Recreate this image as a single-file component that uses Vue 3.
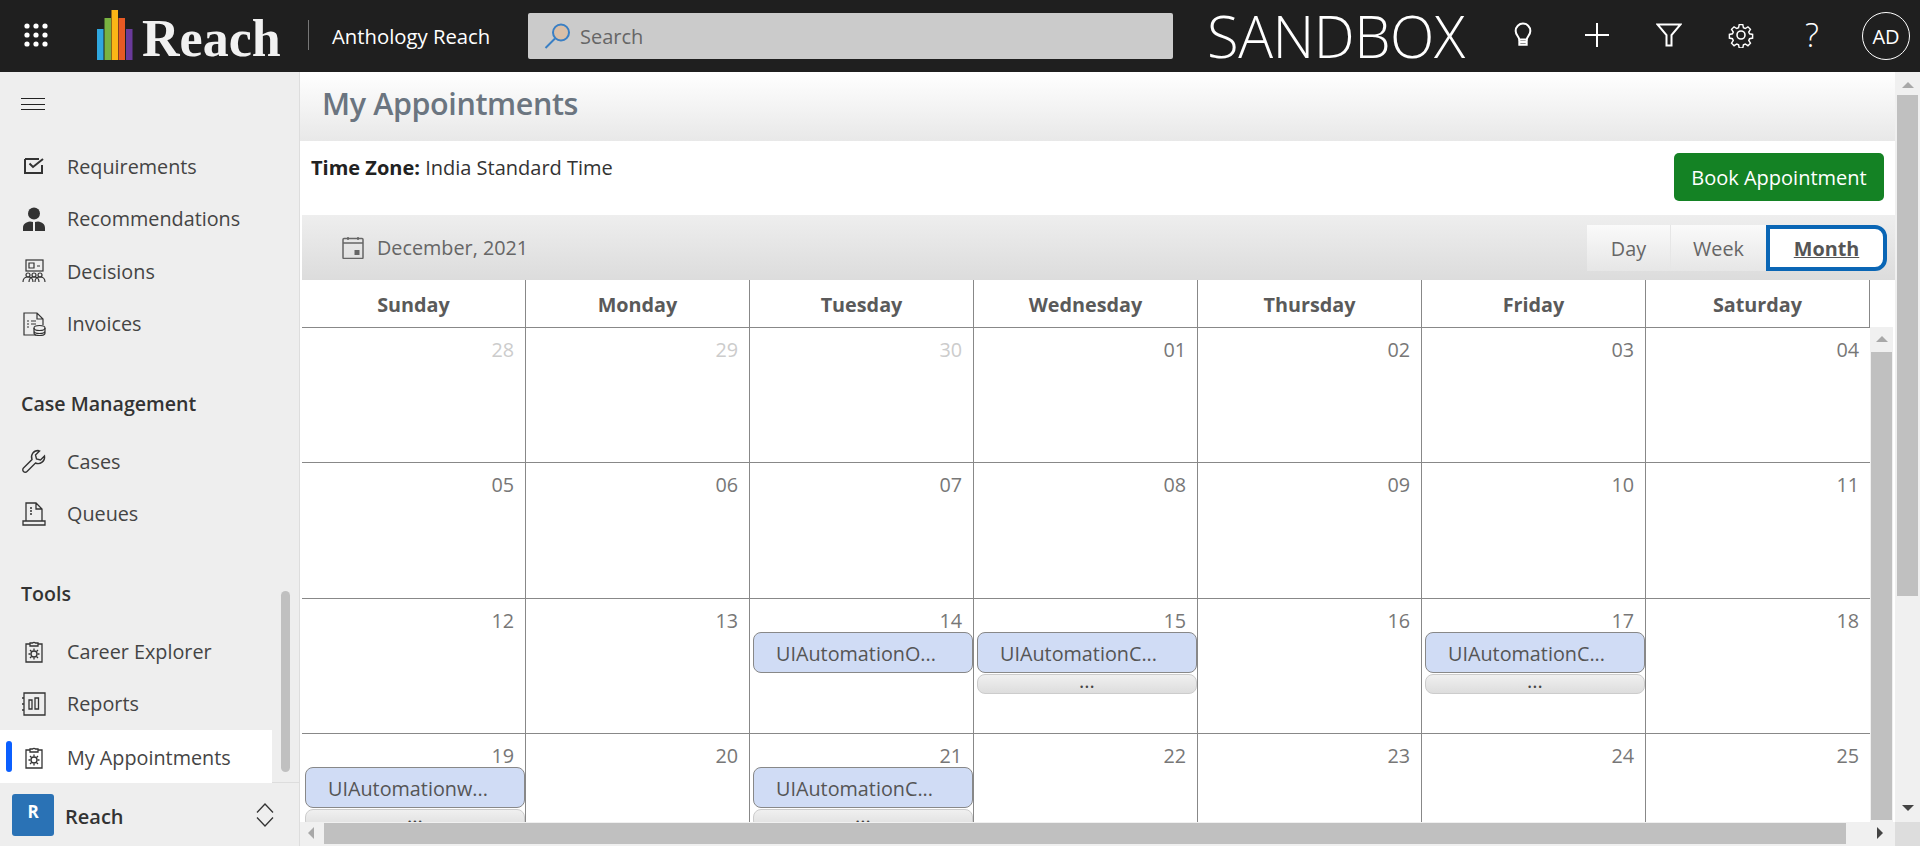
<template>
  <div class="app">
    <header class="topbar">
      <svg class="waffle" width="24" height="24" viewBox="0 0 24 24">
        <g fill="#fff">
          <template v-for="y in [3, 12, 21]" :key="y">
            <circle v-for="x in [3, 12, 21]" :key="x" :cx="x" :cy="y" r="2.6" />
          </template>
        </g>
      </svg>
      <svg class="bars" width="36" height="50" viewBox="0 0 36 50">
        <rect x="0" y="19" width="6.5" height="31" fill="#2fa7df" />
        <rect x="7.5" y="8" width="6.5" height="42" fill="#79b341" />
        <rect x="14.5" y="0" width="6.5" height="50" fill="#fbb616" />
        <rect x="21.5" y="8" width="6.5" height="42" fill="#e85a24" />
        <rect x="29" y="19" width="6.5" height="31" fill="#6a3a9b" />
      </svg>
      <span class="wordmark">Reach</span>
      <span class="divider"></span>
      <span class="product">Anthology Reach</span>
      <div class="search">
        <svg width="28" height="28" viewBox="0 0 28 28" fill="none">
          <circle cx="17" cy="10.5" r="8" fill="#d9bfa8" stroke="#3a7fc4" stroke-width="2" />
          <path d="M11 16.5 1.5 26" stroke="#3a7fc4" stroke-width="2" />
        </svg>
        <span>Search</span>
      </div>
      <span class="env">SANDBOX</span>
      <div class="actions">
        <svg width="22" height="26" viewBox="0 0 24 26" fill="none" stroke="#fff" stroke-width="2.2">
          <path d="M8 18c-.3-3-4-5-4-9.500a8 8 0 0 1 16 0c0 4.500-3.700 6.500-4 9.500z" />
          <path d="M8 18v5.500h8V18M8 20.500h8" />
        </svg>
        <svg width="26" height="26" viewBox="0 0 26 26" stroke="#fff" stroke-width="2">
          <path d="M1 13h24M13 1v24" />
        </svg>
        <svg width="26" height="24" viewBox="0 0 26 24" fill="none" stroke="#fff" stroke-width="2">
          <path d="M1.500 1.500h23L15.500 12v10.500h-5V12z" />
        </svg>
        <svg width="26" height="26" viewBox="0 0 26 26" fill="none" stroke="#fff" stroke-width="1.600">
          <circle cx="13" cy="13" r="4" />
          <path d="M11 1.500h4l.7 3.400 2 .9 3-1.900 2.800 2.800-1.900 3 .9 2 3.400.7v4l-3.400.7-.9 2 1.900 3-2.800 2.800-3-1.900-2 .9-.7 3.400h-4l-.7-3.400-2-.9-3 1.900-2.800-2.800 1.900-3-.9-2-3.400-.7v-4l3.400-.7.9-2-1.900-3 2.800-2.800 3 1.900 2-.9z" transform="translate(1.300 1.300) scale(.9)" />
        </svg>
        <span class="help">?</span>
        <span class="avatar">AD</span>
      </div>
    </header>

    <div class="body">
      <aside class="sidebar">
        <div class="burger">
          <span></span><span></span><span></span>
        </div>
        <nav class="nav">
          <template v-for="entry in nav" :key="entry.label">
            <div v-if="entry.heading" class="nav-heading">{{ entry.label }}</div>
            <div v-else class="nav-item" :class="{ active: entry.active }">
              <svg width="24" height="24" viewBox="0 0 24 24" fill="none" stroke="#333" stroke-width="1.500">
                <g v-if="entry.icon === 'check'">
                  <path d="M3 5h14M3 5v14h17v-8" stroke-width="2" />
                  <path d="M7.500 9.500 11 13l10-8" stroke-width="2" />
                </g>
                <g v-else-if="entry.icon === 'person'">
                  <circle cx="12" cy="6.500" r="6" fill="#333" stroke="none" />
                  <path d="M1 24v-3c0-4 3-6 7-6.500l3 .5v9zM23 24v-3c0-4-3-6-7-6.500l-3 .5v9z" fill="#333" stroke="none" />
                </g>
                <g v-else-if="entry.icon === 'board'" stroke-width="1.200">
                  <rect x="4" y="1" width="17" height="11" />
                  <path d="M7 4h5v5H7zM15 7h3" />
                  <circle cx="6" cy="16" r="2" />
                  <circle cx="12" cy="16" r="2" />
                  <circle cx="18" cy="16" r="2" />
                  <path d="M1 23c0-3 2-5 5-5s5 2 5 5M7 23c0-3 2-5 5-5s5 2 5 5M13 23c0-3 2-5 5-5s5 2 5 5" />
                </g>
                <g v-else-if="entry.icon === 'invoice'" stroke-width="1.200">
                  <path d="M14 23H2V1h13l6 6v6M15 1v6h6" />
                  <path d="M5 9h2M9 9h5M5 12h2M9 12h5M5 15h2" />
                  <ellipse cx="17.500" cy="16" rx="5.500" ry="2.500" />
                  <path d="M12 16v5c0 1.500 2.500 2.500 5.500 2.500S23 22.500 23 21v-5M12 19c0 1.400 2.500 2.500 5.500 2.500S23 20.400 23 19" />
                </g>
                <g v-else-if="entry.icon === 'wrench'" stroke-width="1.400">
                  <path d="M16 1.500a6.500 6.500 0 0 0-6 9L1.500 19a2.400 2.400 0 0 0 3.500 3.500l8.500-8.500a6.500 6.500 0 0 0 9-7l-4 4-4-1-1-4 4-4z" />
                </g>
                <g v-else-if="entry.icon === 'queue'" stroke-width="1.300">
                  <path d="M4 19V1h10l6 6v12M14 1v6h6" />
                  <path d="M8 6h2M8 9h2M8 12h2" />
                  <path d="M1 19v4h22v-4z" />
                </g>
                <g v-else-if="entry.icon === 'clipboard'" stroke-width="1.300">
                  <path d="M8 5H4v18h16V5h-4" />
                  <path d="M8 7V4h2.500a2 2 0 0 1 3 0H16v3z" />
                  <circle cx="12" cy="15" r="3" />
                  <path d="M12 9.500v2M12 18.500v2M6.500 15h2M15.500 15h2M8 11l1.500 1.500M14.500 17.500 16 19M16 11l-1.500 1.500M9.500 17.500 8 19" />
                </g>
                <g v-else-if="entry.icon === 'report'" stroke-width="1.300">
                  <path d="M2 1h21v22H2zM2 6H0M2 12H0M2 18H0" />
                  <path d="M7 8h3v9H7zM13 6h3.500v11H13z" />
                </g>
              </svg>
              <span>{{ entry.label }}</span>
            </div>
          </template>
          <div class="nav-thumb"></div>
        </nav>
        <div class="switcher">
          <span class="tile">R</span>
          <span class="switcher-name">Reach</span>
          <svg width="18" height="24" viewBox="0 0 18 24" fill="none" stroke="#333" stroke-width="1.300">
            <path d="M1 9.500 9 1l8 8.500M1 14.500 9 23l8-8.500" />
          </svg>
        </div>
      </aside>

      <main class="main">
        <div class="content">
          <div class="title-bar"><h1>My Appointments</h1></div>
          <div class="tz-row">
            <p><b>Time Zone:</b> India Standard Time</p>
            <button class="book">Book Appointment</button>
          </div>
          <div class="toolbar">
            <svg width="22" height="23" viewBox="0 0 22 23" fill="none" stroke="#666" stroke-width="1.500">
              <rect x="1" y="2.500" width="20" height="20" rx="1" />
              <path d="M1 7h20M6 1v3M16 1v3" />
              <rect x="12.500" y="14" width="5" height="5" fill="#666" stroke="none" />
            </svg>
            <span class="month-label">December, 2021</span>
            <div class="views">
              <span class="view">Day</span>
              <span class="view">Week</span>
              <span class="view current">Month</span>
            </div>
          </div>
          <div class="calendar">
            <div class="grid">
              <div v-for="d in dayNames" :key="d" class="dow">{{ d }}</div>
              <div v-for="c in cells" :key="c.key" class="cell">
                <div class="num" :class="{ faded: c.faded }">{{ c.num }}</div>
                <div v-if="c.event" class="event">{{ c.event }}</div>
                <div v-if="c.more" class="more">...</div>
              </div>
            </div>
            <div class="vbar">
              <div class="vbar-head"></div>
              <div class="vbar-track">
                <span class="tri up"></span>
                <div class="vbar-thumb"></div>
              </div>
            </div>
          </div>
          <div class="hbar">
            <span class="tri left"></span>
            <div class="hbar-thumb"></div>
            <span class="tri right"></span>
          </div>
        </div>
        <div class="page-bar">
          <div class="page-track">
            <span class="tri up"></span>
            <div class="page-thumb"></div>
            <span class="tri down"></span>
          </div>
          <div class="corner"></div>
        </div>
      </main>
    </div>
  </div>
</template>

<script setup>
const nav = [
  { label: 'Requirements', icon: 'check' },
  { label: 'Recommendations', icon: 'person' },
  { label: 'Decisions', icon: 'board' },
  { label: 'Invoices', icon: 'invoice' },
  { label: 'Case Management', heading: true },
  { label: 'Cases', icon: 'wrench' },
  { label: 'Queues', icon: 'queue' },
  { label: 'Tools', heading: true },
  { label: 'Career Explorer', icon: 'clipboard' },
  { label: 'Reports', icon: 'report' },
  { label: 'My Appointments', icon: 'clipboard', active: true }
];

const dayNames = ['Sunday', 'Monday', 'Tuesday', 'Wednesday', 'Thursday', 'Friday', 'Saturday'];

const events = {
  14: { event: 'UIAutomationO...' },
  15: { event: 'UIAutomationC...', more: true },
  17: { event: 'UIAutomationC...', more: true },
  19: { event: 'UIAutomationw...', more: true },
  21: { event: 'UIAutomationC...', more: true }
};

const cells = [
  { key: 'p28', num: '28', faded: true },
  { key: 'p29', num: '29', faded: true },
  { key: 'p30', num: '30', faded: true }
];
for (let d = 1; d <= 25; d++) {
  cells.push({ key: 'd' + d, num: String(d).padStart(2, '0'), ...events[d] });
}
</script>

<style>
html, body { margin: 0; height: 100%; overflow: hidden; background: #fff; }
</style>

<style scoped>
.app {
  width: 1920px; height: 846px; display: flex; flex-direction: column; overflow: hidden;
  font-family: "Open Sans", "Noto Sans", sans-serif; font-size: 19.800px; color: #444;
}

.topbar {
  height: 72px; flex: none; background: #1f1f1f; display: flex; align-items: center; color: #fff;
}
.waffle { margin-left: 24px; margin-top: -2px; }
.bars { margin-left: 49px; margin-top: -2px; }
.wordmark {
  font-family: "Liberation Serif", serif; font-weight: 700; font-size: 52px; line-height: 1;
  color: #f1f1f1; margin-left: 9px; margin-top: 6px; width: 166px;
}
.divider { width: 1px; height: 30px; background: #777; margin-top: -2px; }
.product { font-size: 20.300px; margin-left: 23px; width: 196px; white-space: nowrap; }
.search {
  width: 645px; height: 46px; background: #cbcbcb; border-radius: 2px; display: flex; align-items: center;
  color: #666; padding-left: 16px; box-sizing: border-box; gap: 8px; font-size: 20px;
}
.env {
  font-weight: 300; font-size: 58px; line-height: 66px; margin-left: 34px; width: 305px; white-space: nowrap;
  color: #fff; letter-spacing: -.5px;
}
.actions { display: flex; align-items: center; }
.actions svg:nth-child(1) { margin-top: -3px; }
.actions svg:nth-child(2) { margin-left: 50px; margin-top: -3px; }
.actions svg:nth-child(3) { margin-left: 46px; margin-top: -3px; }
.actions svg:nth-child(4) { margin-left: 46px; margin-top: -3px; }
.help { font-size: 33px; font-weight: 300; margin-left: 51px; margin-top: -3px; line-height: 1; width: 12px; }
.avatar {
  width: 48px; height: 48px; border: 1.500px solid #fff; border-radius: 50%; box-sizing: border-box;
  display: flex; align-items: center; justify-content: center; font-size: 20px; margin-left: 45px;
}

.body { flex: 1; min-height: 0; display: flex; }

.sidebar {
  width: 300px; flex: none; box-sizing: border-box; background: #eee; border-right: 1px solid #ddd;
  display: flex; flex-direction: column;
}
.burger {
  height: 68px; flex: none; box-sizing: border-box; padding: 26px 0 0 21px; display: flex; flex-direction: column; gap: 4.500px;
}
.burger span { width: 24px; height: 1px; background: #222; }
.nav { position: relative; flex: 1; min-height: 0; }
.nav-heading {
  height: 34px; line-height: 34px; margin: 37px 0 14px 21px; font-weight: 600; font-size: 19.600px; color: #333;
}
.nav-item {
  position: relative; width: 272px; height: 52.500px; display: flex; align-items: center; box-sizing: border-box;
  padding-left: 22px; gap: 21px;
}
.nav-item.active { background: #fff; padding-top: 2px; }
.nav-item.active::before {
  content: ""; position: absolute; left: 6px; top: 11px; width: 6px; height: 31px; border-radius: 3px; background: #0b5fff;
}
.nav-thumb {
  position: absolute; left: 281px; top: 451px; width: 9px; height: 181px; border-radius: 5px; background: #c0c0c0;
}
.switcher {
  height: 64px; flex: none; box-sizing: border-box; border-top: 1px solid #ddd; display: flex; align-items: center; padding-left: 12px;
}
.tile {
  width: 42px; height: 42px; border-radius: 3px; background: #2a72b5; color: #fff; font-weight: 700; font-size: 17px;
  display: flex; align-items: center; justify-content: center; padding-bottom: 6px; box-sizing: border-box;
}
.switcher-name { font-weight: 600; font-size: 20px; margin-left: 11px; width: 196px; color: #333; padding-top: 4px; }
.switcher svg { margin-left: -5px; }

.main { flex: 1; min-width: 0; display: flex; }
.content { width: 1595px; flex: none; display: flex; flex-direction: column; }
.title-bar {
  height: 69px; flex: none; background: linear-gradient(#fff, #e8e8e8); display: flex; align-items: center; padding: 0 0 7px 22px; box-sizing: border-box;
}
h1 { margin: 0; font-size: 30.500px; font-weight: 600; color: #6b7580; letter-spacing: -.4px; }
.tz-row {
  height: 74px; flex: none; display: flex; justify-content: space-between; box-sizing: border-box; padding: 12px 11px 0;
}
.tz-row p { margin: 0; line-height: 30px; color: #333; font-size: 20px; }
.tz-row b { color: #222; }
.book {
  width: 210px; height: 48px; background: #148224; color: #fff; border: 0; border-radius: 5px; font: inherit;
  font-size: 20px; padding: 0; white-space: nowrap;
}
.toolbar {
  height: 65px; flex: none; margin-left: 2px; display: flex; align-items: center; box-sizing: border-box; padding: 0 8px 0 40px;
  background: linear-gradient(#eee, #dcdcdc);
}
.month-label { margin-left: 13px; color: #666; }
.views { margin-left: auto; display: flex; height: 46px; margin-top: 1px; }
.view {
  display: flex; align-items: center; justify-content: center; width: 83px; color: #666;
  background: linear-gradient(#fafafa, #e6e6e6);
}
.view:nth-child(2) { width: 96px; border-left: 1px solid #e6e6e6; box-sizing: border-box; }
.view.current {
  width: 121px; box-sizing: border-box; background: #fff; border: 4px solid #0a66b5; border-radius: 0 12px 12px 0;
  font-weight: 700; color: #555; text-decoration: underline;
}
.calendar { flex: 1; min-height: 0; display: flex; overflow: hidden; margin-left: 2px; }
.grid {
  width: 1568px; flex: none; display: grid; grid-template-columns: repeat(7, 224px); grid-auto-rows: 135.300px;
  grid-template-rows: 48px;
}
.dow {
  box-sizing: border-box; border-right: 1px solid #888; border-bottom: 1px solid #888; display: flex; align-items: center; justify-content: center;
  font-weight: 700; color: #5a5a5a; padding-top: 2px;
}
.dow:last-of-type { border-right-color: #ddd; }
.cell { box-sizing: border-box; border-right: 1px solid #888; border-bottom: 1px solid #888; min-width: 0; }
.cell:nth-of-type(7n) { border-right: 0; }
.num { padding: 11px 11px 0 0; line-height: 22px; text-align: right; color: #777; }
.num.faded { color: #ccc; }
.event {
  height: 41px; width: 220px; margin-left: 3px; box-sizing: border-box; background: #d0dcf5; border: 1px solid #888; border-radius: 8px;
  line-height: 42px; padding-left: 22px; color: #555; position: relative; white-space: nowrap;
}
.more {
  height: 20px; width: 220px; margin: 1px 0 0 3px; box-sizing: border-box; background: linear-gradient(#f0f0f0, #ddd); border: 1px solid #ccc;
  border-radius: 8px; text-align: center; font-size: 20px; line-height: 12px; color: #444;
}
.vbar { width: 25px; flex: none; display: flex; flex-direction: column; }
.vbar-head { height: 47px; flex: none; }
.vbar-track {
  flex: 1; width: 23px; background: #f0f0f0; display: flex; flex-direction: column; align-items: center;
}
.vbar-track .tri { margin: 9px 0 10px; }
.vbar-thumb { width: 21px; height: 468px; background: #c0c0c0; }
.hbar {
  height: 24px; flex: none; background: #f0f0f0; display: flex; align-items: center; padding: 0 0 2px 8px; box-sizing: border-box;
}
.hbar-thumb { width: 1522px; height: 21px; background: #c0c0c0; margin-left: 10px; }
.hbar .tri.right { margin-left: 31px; }

.page-bar { flex: 1; display: flex; flex-direction: column; }
.page-track {
  flex: 1; min-height: 0; background: #f0f0f0; display: flex; flex-direction: column; position: relative; align-items: center;
}
.page-track .tri.up { margin: 10px 0 7px; }
.page-thumb { width: 21px; height: 501px; background: #c0c0c0; }
.page-track .tri.down { margin-top: auto; margin-bottom: 11px; }
.corner { height: 24px; flex: none; background: #ddd; }

.tri { width: 0; height: 0; flex: none; display: block; }
.tri.up { border: 6px solid transparent; border-top: 0; border-bottom: 6px solid #a8a8a8; }
.tri.down { border: 6px solid transparent; border-bottom: 0; border-top: 6px solid #444; }
.tri.left { border: 6px solid transparent; border-left: 0; border-right: 6px solid #a8a8a8; }
.tri.right { border: 6px solid transparent; border-right: 0; border-left: 6px solid #444; }
</style>
